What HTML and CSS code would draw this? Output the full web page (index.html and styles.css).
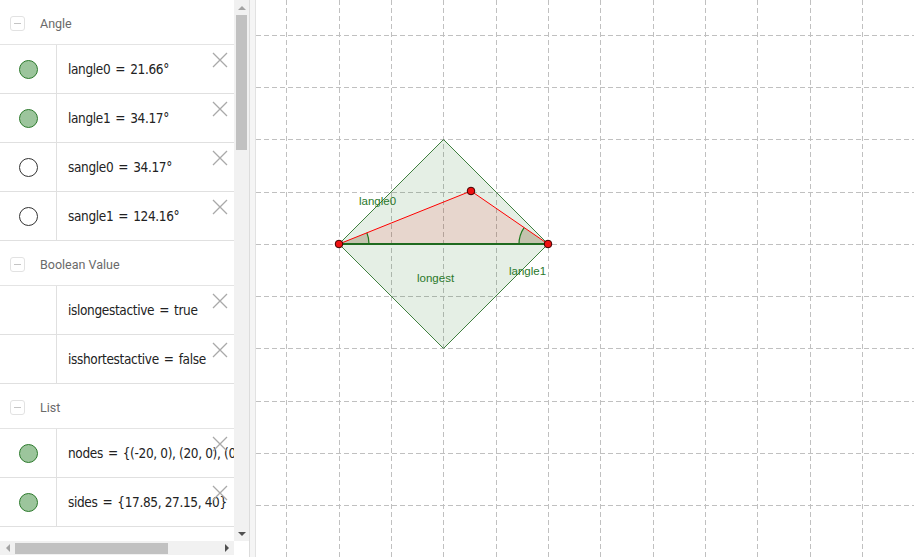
FILE: index.html
```html
<!DOCTYPE html>
<html>
<head>
<meta charset="utf-8">
<link rel="stylesheet" href="styles.css">
</head>
<body>
<div class="app">
  <div class="algebra">
    <div class="alg-main">
      <div class="alg-list">
        <div class="group-head"><span class="collapse"></span><span class="group-title">Angle</span></div>
        <div class="item">
          <div class="marble-cell"><span class="marble on"></span></div>
          <div class="expr">langle0<span class="op">=</span>21.66°</div>
          <svg class="del" viewBox="0 0 16 16"><path d="M1 1L15 15M15 1L1 15"/></svg>
        </div>
        <div class="item">
          <div class="marble-cell"><span class="marble on"></span></div>
          <div class="expr">langle1<span class="op">=</span>34.17°</div>
          <svg class="del" viewBox="0 0 16 16"><path d="M1 1L15 15M15 1L1 15"/></svg>
        </div>
        <div class="item">
          <div class="marble-cell"><span class="marble"></span></div>
          <div class="expr">sangle0<span class="op">=</span>34.17°</div>
          <svg class="del" viewBox="0 0 16 16"><path d="M1 1L15 15M15 1L1 15"/></svg>
        </div>
        <div class="item">
          <div class="marble-cell"><span class="marble"></span></div>
          <div class="expr">sangle1<span class="op">=</span>124.16°</div>
          <svg class="del" viewBox="0 0 16 16"><path d="M1 1L15 15M15 1L1 15"/></svg>
        </div>
        <div class="group-head"><span class="collapse"></span><span class="group-title">Boolean Value</span></div>
        <div class="item">
          <div class="marble-cell"></div>
          <div class="expr">islongestactive<span class="op">=</span>true</div>
          <svg class="del" viewBox="0 0 16 16"><path d="M1 1L15 15M15 1L1 15"/></svg>
        </div>
        <div class="item">
          <div class="marble-cell"></div>
          <div class="expr">isshortestactive<span class="op">=</span>false</div>
          <svg class="del" viewBox="0 0 16 16"><path d="M1 1L15 15M15 1L1 15"/></svg>
        </div>
        <div class="group-head"><span class="collapse"></span><span class="group-title">List</span></div>
        <div class="item">
          <div class="marble-cell"><span class="marble on"></span></div>
          <div class="expr">nodes<span class="op">=</span>{(-20, 0), (20, 0), (0, 0)}</div>
          <svg class="del" viewBox="0 0 16 16"><path d="M1 1L15 15M15 1L1 15"/></svg>
        </div>
        <div class="item">
          <div class="marble-cell"><span class="marble on"></span></div>
          <div class="expr">sides<span class="op">=</span>{17.85, 27.15, 40}</div>
          <svg class="del" viewBox="0 0 16 16"><path d="M1 1L15 15M15 1L1 15"/></svg>
        </div>
      </div>
      <div class="vscroll">
        <div class="arr-box"><span class="arr up"></span></div>
        <div class="vthumb"></div>
        <div class="vspace"></div>
        <div class="arr-box"><span class="arr down"></span></div>
      </div>
    </div>
    <div class="hrow">
      <div class="hscroll">
        <div class="harr-box"><span class="arr left"></span></div>
        <div class="hthumb"></div>
        <div class="hspace"></div>
        <div class="harr-box"><span class="arr right"></span></div>
      </div>
      <div class="corner"></div>
    </div>
  </div>
  <div class="splitter"></div>
  <div class="graphics">
    <svg class="plot" width="658" height="557" viewBox="0 0 658 557">
      <g class="grid">
        <path d="M30.5 0V557M83.5 0V557M135.5 0V557M187.5 0V557M240.5 0V557M292.5 0V557M344.5 0V557M397.5 0V557M449.5 0V557M501.5 0V557M554.5 0V557M606.5 0V557"/>
        <path d="M0 35.5H658M0 87.5H658M0 139.5H658M0 192.5H658M0 244.5H658M0 296.5H658M0 348.5H658M0 401.5H658M0 453.5H658M0 505.5H658"/>
      </g>
      <polygon class="square" points="83,244 187.5,139.5 292,244 187.5,348.5"/>
      <polygon class="tri" points="83,244 215,191 292,244"/>
      <path class="angle" d="M83 244L113 244A30 30 0 0 0 110.85 232.8Z"/>
      <path class="angle" d="M292 244L263 244A29 29 0 0 1 268.1 227.6Z"/>
      <path class="arc" d="M113 244A30 30 0 0 0 110.85 232.8"/>
      <path class="arc" d="M263 244A29 29 0 0 1 268.1 227.6"/>
      <line class="redseg" x1="83" y1="244" x2="215" y2="191"/>
      <line class="redseg" x1="215" y1="191" x2="292" y2="244"/>
      <line class="longest" x1="83" y1="244" x2="292" y2="244"/>
      <circle class="pt" cx="83" cy="244" r="3.8"/>
      <circle class="pt" cx="292" cy="244" r="3.8"/>
      <circle class="pt" cx="215" cy="191" r="3.8"/>
      <text class="lbl" x="103" y="205">langle0</text>
      <text class="lbl" x="161" y="282">longest</text>
      <text class="lbl" x="253" y="275">langle1</text>
    </svg>
  </div>
</div>
</body>
</html>
```

FILE: styles.css
```css
html, body {
  margin: 0;
  padding: 0;
  background: #fff;
}
body {
  width: 914px;
  height: 557px;
  overflow: hidden;
}
.app {
  display: flex;
  width: 914px;
  height: 557px;
}
.algebra {
  width: 249px;
  display: flex;
  flex-direction: column;
  background: #fff;
}
.alg-main {
  display: flex;
  height: 541px;
}
.alg-list {
  width: 234px;
  overflow: hidden;
  background: #fff;
}
.group-head {
  border-bottom: 1px solid #e4e4e4;
  display: flex;
  align-items: center;
  padding: 2px 0 0 10px;
  box-sizing: border-box;
  height: 45px;
}
.collapse {
  width: 13px;
  height: 13px;
  border: 1px solid #e2e2e2;
  border-radius: 3px;
  position: relative;
  flex: none;
}
.collapse::after {
  content: "";
  position: absolute;
  left: 3px;
  top: 6px;
  width: 7px;
  height: 1px;
  background: #c4c4c4;
}
.group-title {
  margin-left: 15px;
  font-family: Roboto, "Liberation Sans", sans-serif;
  font-size: 12.5px;
  color: #6a6a6a;
}
.item {
  height: 49px;
  box-sizing: border-box;
  border-bottom: 1px solid #e0e0e0;
  display: flex;
  position: relative;
}
.marble-cell {
  width: 56px;
  flex: none;
  border-right: 1px solid #e0e0e0;
  display: flex;
  align-items: center;
  justify-content: center;
}
.marble {
  width: 17px;
  height: 17px;
  border-radius: 50%;
  border: 1px solid #333;
  background: #fff;
}
.marble.on {
  background: #9cc59c;
  border-color: #2c7a2c;
}
.expr {
  padding-left: 11px;
  display: flex;
  align-items: center;
  white-space: nowrap;
  font-family: "DejaVu Sans", sans-serif;
  font-stretch: condensed;
  font-size: 13.5px;
  letter-spacing: -0.35px;
  color: #222;
}
.op {
  margin: 0 5px;
}
.del {
  position: absolute;
  right: 6px;
  top: 7px;
  width: 16px;
  height: 16px;
  fill: none;
  stroke: #a9a9a9;
  stroke-width: 1.3;
}
.vscroll {
  width: 15px;
  background: #f1f1f1;
  display: flex;
  flex-direction: column;
  align-items: center;
}
.arr-box {
  height: 15px;
  width: 15px;
  display: flex;
  align-items: center;
  justify-content: center;
}
.vthumb {
  width: 11px;
  height: 135px;
  background: #c1c1c1;
}
.vspace {
  flex: 1;
}
.arr {
  width: 0;
  height: 0;
  border-style: solid;
  border-color: transparent;
}
.arr.up {
  border-width: 0 4px 4px 4px;
  border-bottom-color: #a3a3a3;
}
.arr.down {
  border-width: 4px 4px 0 4px;
  border-top-color: #505050;
}
.arr.left {
  border-width: 4px 4px 4px 0;
  border-right-color: #a3a3a3;
}
.arr.right {
  border-width: 4px 0 4px 4px;
  border-left-color: #505050;
}
.hrow {
  display: flex;
  height: 16px;
}
.hscroll {
  width: 234px;
  height: 14px;
  background: #f1f1f1;
  display: flex;
  align-items: center;
}
.harr-box {
  width: 15px;
  height: 14px;
  display: flex;
  align-items: center;
  justify-content: center;
}
.hthumb {
  width: 153px;
  height: 11px;
  background: #c1c1c1;
}
.hspace {
  flex: 1;
}
.corner {
  width: 15px;
  background: #fff;
}
.splitter {
  width: 5px;
  background: #f5f5f5;
  border-left: 1px solid #dcdcdc;
  border-right: 1px solid #e2e2e2;
}
.graphics {
  width: 658px;
  height: 557px;
  background: #fff;
  overflow: hidden;
}
.plot {
  display: block;
}
.grid path {
  fill: none;
  stroke: #c0c0c0;
  stroke-width: 1;
  stroke-dasharray: 5 3;
  shape-rendering: crispEdges;
}
.square {
  fill: rgba(0, 100, 0, 0.1);
  stroke: #3f7f3f;
  stroke-width: 1;
}
.tri {
  fill: rgba(255, 0, 0, 0.1);
  stroke: none;
}
.angle {
  fill: rgba(0, 90, 0, 0.15);
  stroke: none;
}
.arc {
  fill: none;
  stroke: #1e7a1e;
  stroke-width: 1.2;
}
.redseg {
  stroke: #ff0000;
  stroke-width: 1;
}
.longest {
  stroke: #1f6a1f;
  stroke-width: 1.8;
}
.pt {
  fill: #f01010;
  stroke: #3a0000;
  stroke-width: 1;
}
.lbl {
  font-family: "Liberation Sans", Arial, sans-serif;
  font-size: 11.5px;
  fill: #2a782a;
}
```
